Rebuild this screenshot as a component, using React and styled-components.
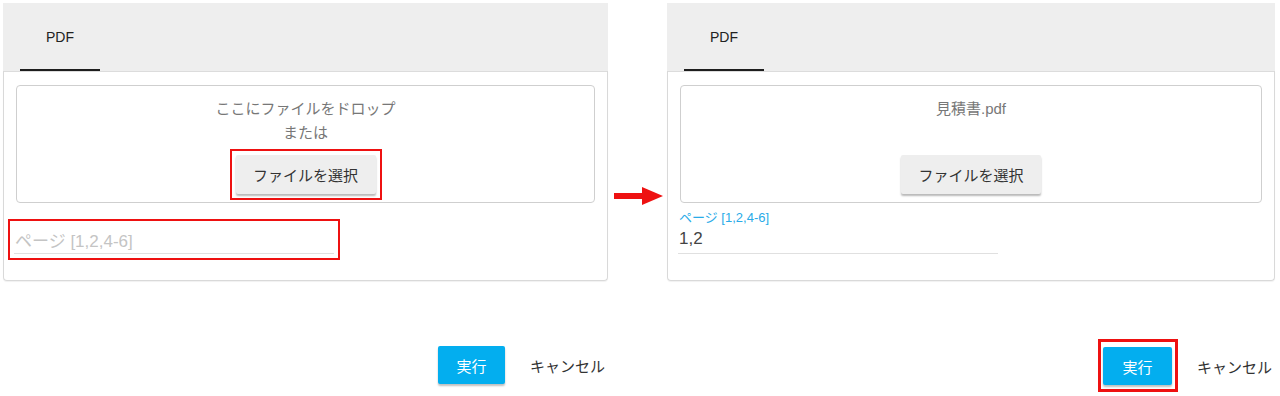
import styled, { createGlobalStyle } from 'styled-components'

const GlobalStyle = createGlobalStyle`
  html, body {
    margin: 0;
    background: #fff;
    font-family: "Liberation Sans", "Noto Sans CJK JP", Arial, sans-serif;
    color: #333;
  }
`;

// red annotation frame drawn over whatever it wraps
const Mark = styled.span`
  position: relative;
  display: ${p => (p.$block ? 'flex' : 'inline-flex')};
  flex-direction: column;
  &::after {
    content: '';
    position: absolute;
    inset: ${p => p.$inset || '-6px'};
    border: ${p => p.$weight || 2}px solid ${p => (p.$on ? '#ee1111' : 'transparent')};
    pointer-events: none;
  }
`;

const Page = styled.div`
  display: flex;
  align-items: flex-start;
  padding: 3px;
  width: 1280px;
  min-height: 396px;
  box-sizing: border-box;
`;

const Column = styled.div`
  display: flex;
  flex-direction: column;
  width: ${p => p.$width}px;
`;

const ArrowSlot = styled.div`
  width: 59px;
  padding: 184px 0 0 6px;
  box-sizing: border-box;
  display: flex;
`;

const Panel = styled.div`
  display: flex;
  flex-direction: column;
`;

const TabBar = styled.div`
  display: flex;
  height: 68px;
  background: #eeeeee;
  padding-left: 17px;
  box-shadow: 0 1px 0 #dcdcdc;
`;

const Tab = styled.div`
  width: 80px;
  display: flex;
  align-items: center;
  justify-content: center;
  font-size: 14px;
  color: #222;
  border-bottom: 2px solid ${p => (p.$active ? '#1e1e1e' : 'transparent')};
  box-sizing: border-box;
  padding-top: 2px;
`;

const Card = styled.div`
  border: 1px solid #d9d9d9;
  border-top: none;
  border-radius: 0 0 4px 4px;
  padding: 14px 12px 26px;
  box-shadow: 0 1px 1px rgba(0, 0, 0, 0.06);
`;

const DropZone = styled.div`
  border: 1px solid #cfcfcf;
  border-radius: 4px;
  padding: 11px 0 8px;
  display: flex;
  flex-direction: column;
  align-items: center;
`;

const DropLine = styled.div`
  height: 24px;
  line-height: 24px;
  font-size: 15px;
  color: #777;
`;

const SelectWrap = styled.div`
  margin-top: 10px;
`;

const SelectButton = styled.button`
  width: 140px;
  height: 39px;
  border: none;
  border-radius: 2px;
  background: #eeeeee;
  color: #333;
  font-family: inherit;
  font-size: 15px;
  box-shadow: 0 2px 2px rgba(0, 0, 0, 0.28);
`;

const Field = styled.div`
  width: 320px;
  margin: 8px 0 0 -2px;
  display: flex;
  flex-direction: column;
`;

const FieldLabel = styled.div`
  height: 14px;
  line-height: 14px;
  font-size: 13px;
  color: #29abe8;
  padding-left: 1px;
`;

const InputRow = styled.div`
  height: 28px;
  border-bottom: 1px solid #e0e0e0;
  display: flex;
  align-items: center;
  font-size: 17px;
  color: ${p => (p.$placeholder ? '#c4c4c4' : '#444')};
  padding: 0 1px;
`;

const Footer = styled.div`
  display: flex;
  justify-content: flex-end;
  align-items: center;
  gap: 22px;
  margin-top: ${p => p.$top}px;
`;

const RunButton = styled.button`
  width: ${p => p.$w || 67}px;
  height: 38px;
  border: none;
  border-radius: 2px;
  background: #03aeef;
  color: #fff;
  font-family: inherit;
  font-size: 15px;
  box-shadow: 0 2px 2px rgba(0, 0, 0, 0.25);
`;

const CancelButton = styled.button`
  border: none;
  background: none;
  padding: 0 3px;
  height: 38px;
  font-family: inherit;
  font-size: 15px;
  color: #333;
`;

function Arrow () {
  return (
    <svg width="50" height="18" viewBox="0 0 50 18">
      <rect x="0" y="6" width="30" height="6" fill="#ee1111" />
      <polygon points="28,0 49,9 28,18" fill="#ee1111" />
    </svg>
  )
}

function Screen ({ width, fileName, value, markSelect, markInput, markRun, footerTop, runWidth }) {
  return (
    <Column $width={width}>
      <Panel>
        <TabBar>
          <Tab $active>PDF</Tab>
        </TabBar>
        <Card>
          <DropZone>
            <DropLine>{fileName || 'ここにファイルをドロップ'}</DropLine>
            <DropLine>{fileName ? '\u00a0' : 'または'}</DropLine>
            <SelectWrap>
              <Mark $on={markSelect}>
                <SelectButton>ファイルを選択</SelectButton>
              </Mark>
            </SelectWrap>
          </DropZone>
          <Field>
            <FieldLabel>{value ? 'ページ [1,2,4-6]' : ''}</FieldLabel>
            <Mark $block $on={markInput}>
              <InputRow $placeholder={!value}>
                {value || 'ページ [1,2,4-6]'}
              </InputRow>
            </Mark>
          </Field>
        </Card>
      </Panel>
      <Footer $top={footerTop}>
        <Mark $on={markRun} $inset="-8px -6px -7px -5px" $weight={3}>
          <RunButton $w={runWidth}>実行</RunButton>
        </Mark>
        <CancelButton>キャンセル</CancelButton>
      </Footer>
    </Column>
  )
}

export default function App () {
  return (
    <>
      <GlobalStyle />
      <Page>
        <Screen width={605} markSelect markInput footerTop={65} />
        <ArrowSlot>
          <Arrow />
        </ArrowSlot>
        <Screen width={608} fileName="見積書.pdf" value="1,2" markRun footerTop={66} runWidth={69} />
      </Page>
    </>
  )
}
